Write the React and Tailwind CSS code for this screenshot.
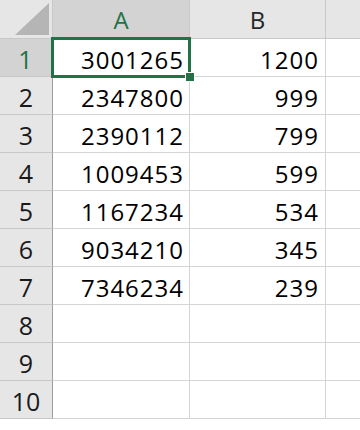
const rows = [
  ["3001265", "1200"],
  ["2347800", "999"],
  ["2390112", "799"],
  ["1009453", "599"],
  ["1167234", "534"],
  ["9034210", "345"],
  ["7346234", "239"],
  ["", ""],
  ["", ""],
  ["", ""],
];

const font = { fontFamily: '"Open Sans", "Liberation Sans", sans-serif' };

export default function App() {
  return (
    <div
      className="w-[360px] h-[430px] overflow-hidden bg-white text-[24px] text-black"
      style={font}
    >
      <div className="grid grid-cols-[53px_137px_136px_1fr] grid-rows-[39px_repeat(10,38px)]">
        {/* corner */}
        <div className="relative bg-[#e6e6e6] border-r border-b border-[#c8c8c8] overflow-hidden">
          <svg className="absolute right-[3px] bottom-[3px]" width="34" height="32" viewBox="0 0 34 32">
            <polygon points="34,0 34,32 0,32" fill="#b5b5b5" />
          </svg>
        </div>
        <div className="flex items-center justify-center bg-[#d3d3d3] border-r border-b-2 border-r-[#c8c8c8] border-b-[#217346] text-[#217346] leading-none pt-[2px]">
          A
        </div>
        <div className="flex items-center justify-center bg-[#e6e6e6] border-r border-b border-[#c8c8c8] text-[#262626] leading-none pt-[2px]">
          B
        </div>
        <div className="bg-[#e6e6e6] border-b border-[#c8c8c8]" />

        {rows.map(([a, b], i) => (
          <Row key={i} n={i + 1} a={a} b={b} />
        ))}
      </div>
    </div>
  );
}

function Row({ n, a, b }) {
  const sel = n === 1;
  return (
    <>
      <div
        className={
          "flex items-center justify-center border-b border-r leading-none pt-[4px] text-[25px] " +
          (sel
            ? "bg-[#d3d3d3] text-[#217346] border-b-[#c8c8c8] border-r-[#217346] border-r-2"
            : "bg-[#e6e6e6] text-[#1a1a1a] border-b-[#c8c8c8] border-r-[#9e9e9e]")
        }
      >
        {n}
      </div>
      <div className="relative flex items-center justify-end pr-[5px] pt-[4px] border-r border-b border-[#d4d4d4] leading-none tracking-[1px]">
        {a}
        {sel && (
          <div className="absolute z-10 left-[-2px] top-[-2px] right-[-2px] bottom-[-2px] border-[3px] border-[#217346] pointer-events-none">
            <div className="absolute right-[-6px] bottom-[-6px] w-[8px] h-[8px] bg-[#217346] outline outline-1 outline-white" />
          </div>
        )}
      </div>
      <div className="flex items-center justify-end pr-[6px] pt-[4px] border-r border-b border-[#d4d4d4] leading-none tracking-[1px]">
        {b}
      </div>
      <div className="border-b border-[#d4d4d4]" />
    </>
  );
}
